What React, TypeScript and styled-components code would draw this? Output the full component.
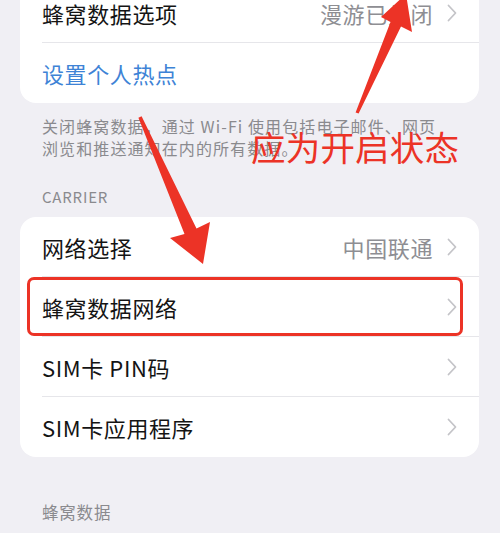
import React from "react";
import styled, { createGlobalStyle } from "styled-components";

const red = "#ec3326";

const GlobalStyle = createGlobalStyle`
  html, body {
    margin: 0;
    padding: 0;
    background: #f0eff4;
  }
  body {
    font-family: "Noto Sans CJK SC", "Noto Sans", sans-serif;
  }
`;

const Page = styled.div`
  position: relative;
  width: 500px;
  height: 533px;
  overflow: hidden;
  background: #f0eff4;
  padding: 0 21px 0 20px;
  box-sizing: border-box;
`;

const Card = styled.div<{ $top?: number }>`
  background: #ffffff;
  border-radius: 16px;
  margin-top: ${(p) => p.$top ?? 0}px;
  overflow: hidden;
`;

const Row = styled.div`
  padding-left: 22px;
`;

const RowInner = styled.div<{ $last?: boolean }>`
  height: 60px;
  box-sizing: border-box;
  display: flex;
  align-items: center;
  padding-right: 22px;
  border-bottom: ${(p) => (p.$last ? "none" : "1px solid #e6e6ea")};
`;

const Label = styled.span<{ $link?: boolean }>`
  flex: 1;
  font-size: 22px;
  letter-spacing: 0.6px;
  color: ${(p) => (p.$link ? "#3e83d6" : "#141414")};
`;

const Value = styled.span`
  font-size: 22px;
  letter-spacing: 0.6px;
  color: #8e8e93;
  margin-right: 14px;
`;

const Chevron = styled.svg`
  width: 10px;
  height: 18px;
  flex: none;
`;

const Footer = styled.div`
  padding: 12px 22px 0;
  font-size: 16px;
  letter-spacing: 1.1px;
  line-height: 22px;
  color: #8a8a8e;
`;

const Line = styled.span`
  display: block;
  white-space: nowrap;
`;

const Header = styled.div<{ $top: number; $size: number }>`
  margin: ${(p) => p.$top}px 0 10px;
  padding-left: 22px;
  font-size: ${(p) => p.$size}px;
  line-height: 20px;
  letter-spacing: 0.8px;
  color: #8a8a8e;
`;

const Overlay = styled.svg`
  position: absolute;
  left: 0;
  top: 0;
  width: 500px;
  height: 533px;
  pointer-events: none;
`;

const HighlightBox = styled.div`
  position: absolute;
  left: 27px;
  top: 277px;
  width: 436px;
  height: 59px;
  box-sizing: border-box;
  border: 3px solid ${red};
  border-radius: 7px;
`;

const Note = styled.div`
  position: absolute;
  left: 251px;
  top: 124px;
  font-size: 34.5px;
  line-height: 44px;
  letter-spacing: 0.2px;
  color: ${red};
  white-space: nowrap;
`;

function ChevronIcon() {
  return (
    <Chevron viewBox="0 0 10 18">
      <path d="M1.5 1.5 L8.5 9 L1.5 16.5" fill="none" stroke="#c4c4c8" strokeWidth="1.8" strokeLinecap="round" strokeLinejoin="round" />
    </Chevron>
  );
}

type Item = { label: string; value?: string; link?: boolean; chevron?: boolean };

function Group({ items, top }: { items: Item[]; top?: number }) {
  return (
    <Card $top={top}>
      {items.map((it, i) => (
        <Row key={it.label}>
          <RowInner $last={i === items.length - 1}>
            <Label $link={it.link}>{it.label}</Label>
            {it.value && <Value>{it.value}</Value>}
            {it.chevron !== false && <ChevronIcon />}
          </RowInner>
        </Row>
      ))}
    </Card>
  );
}

export default function App() {
  return (
    <>
      <GlobalStyle />
      <Page>
        <Group
          top={-17}
          items={[
            { label: "蜂窝数据选项", value: "漫游已关闭" },
            { label: "设置个人热点", link: true, chevron: false },
          ]}
        />
        <Footer>
          <Line>关闭蜂窝数据，通过 Wi-Fi 使用包括电子邮件、网页</Line>
          <Line>浏览和推送通知在内的所有数据。</Line>
        </Footer>
        <Header $top={28} $size={15}>CARRIER</Header>
        <Group
          items={[
            { label: "网络选择", value: "中国联通" },
            { label: "蜂窝数据网络" },
            { label: "SIM卡 PIN码" },
            { label: "SIM卡应用程序" },
          ]}
        />
        <Header $top={45} $size={16.5}>蜂窝数据</Header>
        <Card />

        <HighlightBox />
        <Note>应为开启状态</Note>
        <Overlay viewBox="0 0 500 533">
          <polygon
            fill={red}
            points="355.6,112.4 390.5,22 381,17 406,-6 412,32 401,26.5 358.6,113.6"
          />
          <polygon
            fill={red}
            points="138.4,117.8 184.5,234 170,238 203,264 210,222 196.5,228.5 141.6,116.2"
          />
        </Overlay>
      </Page>
    </>
  );
}
